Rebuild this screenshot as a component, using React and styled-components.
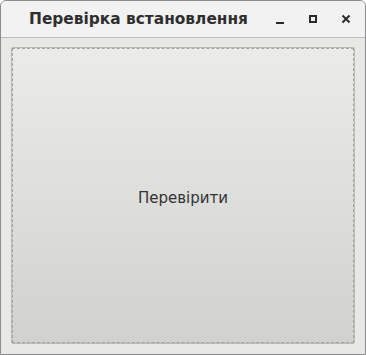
import styled, { createGlobalStyle } from "styled-components";

const GlobalStyle = createGlobalStyle`
    html, body {
        margin: 0;
        padding: 0;
        background: #ffffff;
    }
    * {
        box-sizing: border-box;
    }
`;

export default function App() {
    return (
        <>
            <GlobalStyle />
            <Window>
                <TitleBar>
                    <Title>Перевірка встановлення</Title>
                    <Controls>
                        <ControlButton aria-label="minimize">
                            <MinimizeGlyph />
                        </ControlButton>
                        <ControlButton aria-label="maximize">
                            <MaximizeGlyph />
                        </ControlButton>
                        <ControlButton aria-label="close">
                            <svg width="10" height="10" viewBox="0 0 10 10">
                                <path d="M1.5 1.5 L8.5 8.5 M8.5 1.5 L1.5 8.5" stroke="#2b2b2b" strokeWidth="2" />
                            </svg>
                        </ControlButton>
                    </Controls>
                </TitleBar>
                <Content>
                    <CheckButton>Перевірити</CheckButton>
                </Content>
            </Window>
        </>
    );
}

const Window = styled.div`
    width: 366px;
    height: 355px;
    display: flex;
    flex-direction: column;
    border: 1px solid #8c8c8c;
    border-radius: 6px 6px 0 0;
    overflow: hidden;
    background: #e8e8e7;
`;

const TitleBar = styled.div`
    height: 37px;
    flex-shrink: 0;
    display: flex;
    align-items: center;
    padding: 0 0 0 28px;
    background: #f2f2f2;
    border-bottom: 1px solid #bdbdbd;
`;

const Title = styled.div`
    flex: 1;
    font-family: "DejaVu Sans", sans-serif;
    font-weight: bold;
    font-size: 15.4px;
    color: #2e2e2e;
    white-space: nowrap;
`;

const Controls = styled.div`
    display: flex;
    align-items: center;
    gap: 11px;
    padding-right: 8px;
`;

const ControlButton = styled.button`
    width: 22px;
    height: 22px;
    padding: 0;
    border: none;
    background: transparent;
    display: flex;
    align-items: center;
    justify-content: center;
`;

const MinimizeGlyph = styled.span`
    width: 8px;
    height: 2px;
    margin-top: 7px;
    background: #2b2b2b;
`;

const MaximizeGlyph = styled.span`
    width: 8px;
    height: 8px;
    border: 2px solid #2b2b2b;
`;

const Content = styled.div`
    flex: 1;
    display: flex;
    padding: 9px 10px 10px 10px;
`;

const CheckButton = styled.button`
    flex: 1;
    position: relative;
    padding: 4px 0 0 0;
    border: 1px solid #b9b9b8;
    border-radius: 2px;
    background: linear-gradient(to bottom, #ebebea, #d1d1cf);
    font-family: "DejaVu Sans", sans-serif;
    font-size: 15px;
    color: #333333;

    &::after {
        content: "";
        position: absolute;
        inset: 0;
        border: 1px dashed #a3a3a3;
    }
`;
